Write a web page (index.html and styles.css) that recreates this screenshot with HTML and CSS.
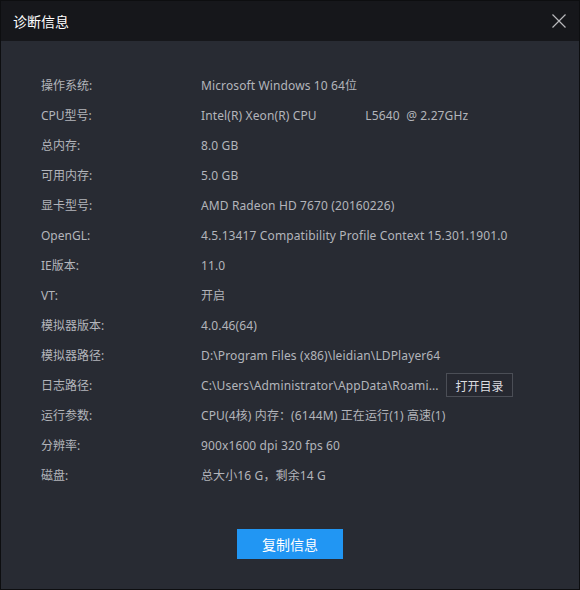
FILE: index.html
```html
<!DOCTYPE html>
<html lang="zh-CN">
<head>
<meta charset="utf-8">
<link rel="stylesheet" href="styles.css">
</head>
<body>
<div class="window">
  <div class="titlebar">
    <span class="title">诊断信息</span>
    <svg class="close" width="14" height="14" viewBox="0 0 14 14"><path d="M0.5 0.5 L13.5 13.5 M13.5 0.5 L0.5 13.5" stroke="#b8b9bc" stroke-width="1.2" fill="none"/></svg>
  </div>
  <div class="content">
    <div class="rows">
      <div class="row"><span class="label">操作系统:</span><span class="value">Microsoft Windows 10 64位</span></div>
      <div class="row"><span class="label">CPU型号:</span><span class="value pre">Intel(R) Xeon(R) CPU               L5640  @ 2.27GHz</span></div>
      <div class="row"><span class="label">总内存:</span><span class="value">8.0 GB</span></div>
      <div class="row"><span class="label">可用内存:</span><span class="value">5.0 GB</span></div>
      <div class="row"><span class="label">显卡型号:</span><span class="value">AMD Radeon HD 7670 (20160226)</span></div>
      <div class="row"><span class="label">OpenGL:</span><span class="value">4.5.13417 Compatibility Profile Context 15.301.1901.0</span></div>
      <div class="row"><span class="label">IE版本:</span><span class="value">11.0</span></div>
      <div class="row"><span class="label">VT:</span><span class="value">开启</span></div>
      <div class="row"><span class="label">模拟器版本:</span><span class="value">4.0.46(64)</span></div>
      <div class="row"><span class="label">模拟器路径:</span><span class="value">D:\Program Files (x86)\leidian\LDPlayer64</span></div>
      <div class="row"><span class="label">日志路径:</span><span class="value path">C:\Users\Administrator\AppData\Roami...</span><button class="open-btn">打开目录</button></div>
      <div class="row"><span class="label">运行参数:</span><span class="value">CPU(4核) 内存：(6144M) 正在运行(1) 高速(1)</span></div>
      <div class="row"><span class="label">分辨率:</span><span class="value">900x1600 dpi 320 fps 60</span></div>
      <div class="row"><span class="label">磁盘:</span><span class="value">总大小16 G，剩余14 G</span></div>
    </div>
    <div class="actions">
      <button class="copy-btn">复制信息</button>
    </div>
  </div>
</div>
</body>
</html>
```
FILE: styles.css
```css
html, body {
  margin: 0;
  padding: 0;
  background: #0f1013;
}
body {
  width: 580px;
  height: 590px;
  font-family: "Noto Sans", "Noto Sans CJK SC", sans-serif;
  font-size: 12px;
}
.window {
  box-sizing: border-box;
  width: 580px;
  height: 590px;
  border: 1px solid #0d0e10;
  display: flex;
  flex-direction: column;
  background: #282b33;
}
.titlebar {
  height: 40px;
  flex: none;
  background: #16171b;
  display: flex;
  align-items: center;
  justify-content: space-between;
  padding: 0 13px 0 12px;
}
.title {
  color: #ffffff;
  font-size: 14px;
  font-family: "Noto Sans CJK SC", sans-serif;
}
.close {
  display: block;
}
.content {
  flex: 1;
  padding: 29px 0 0 40px;
}
.row {
  height: 30px;
  display: flex;
  align-items: center;
  color: #b3b5bb;
}
.label {
  width: 160px;
  flex: none;
}
.value {
  letter-spacing: 0.12px;
}
.value.pre {
  white-space: pre;
}
.path {
  width: 245px;
}
.open-btn {
  height: 24px;
  width: 67px;
  padding: 0;
  background: #262830;
  border: 1px solid #4b4e56;
  color: #dcdde0;
  font-family: "Noto Sans CJK SC", sans-serif;
  font-size: 12px;
}
.actions {
  display: flex;
  justify-content: center;
  padding-top: 39px;
  margin-left: -40px;
}
.copy-btn {
  width: 106px;
  height: 30px;
  border: none;
  background: #2196f3;
  color: #ffffff;
  font-family: "Noto Sans CJK SC", sans-serif;
  font-size: 14px;
  padding: 0;
}
```
